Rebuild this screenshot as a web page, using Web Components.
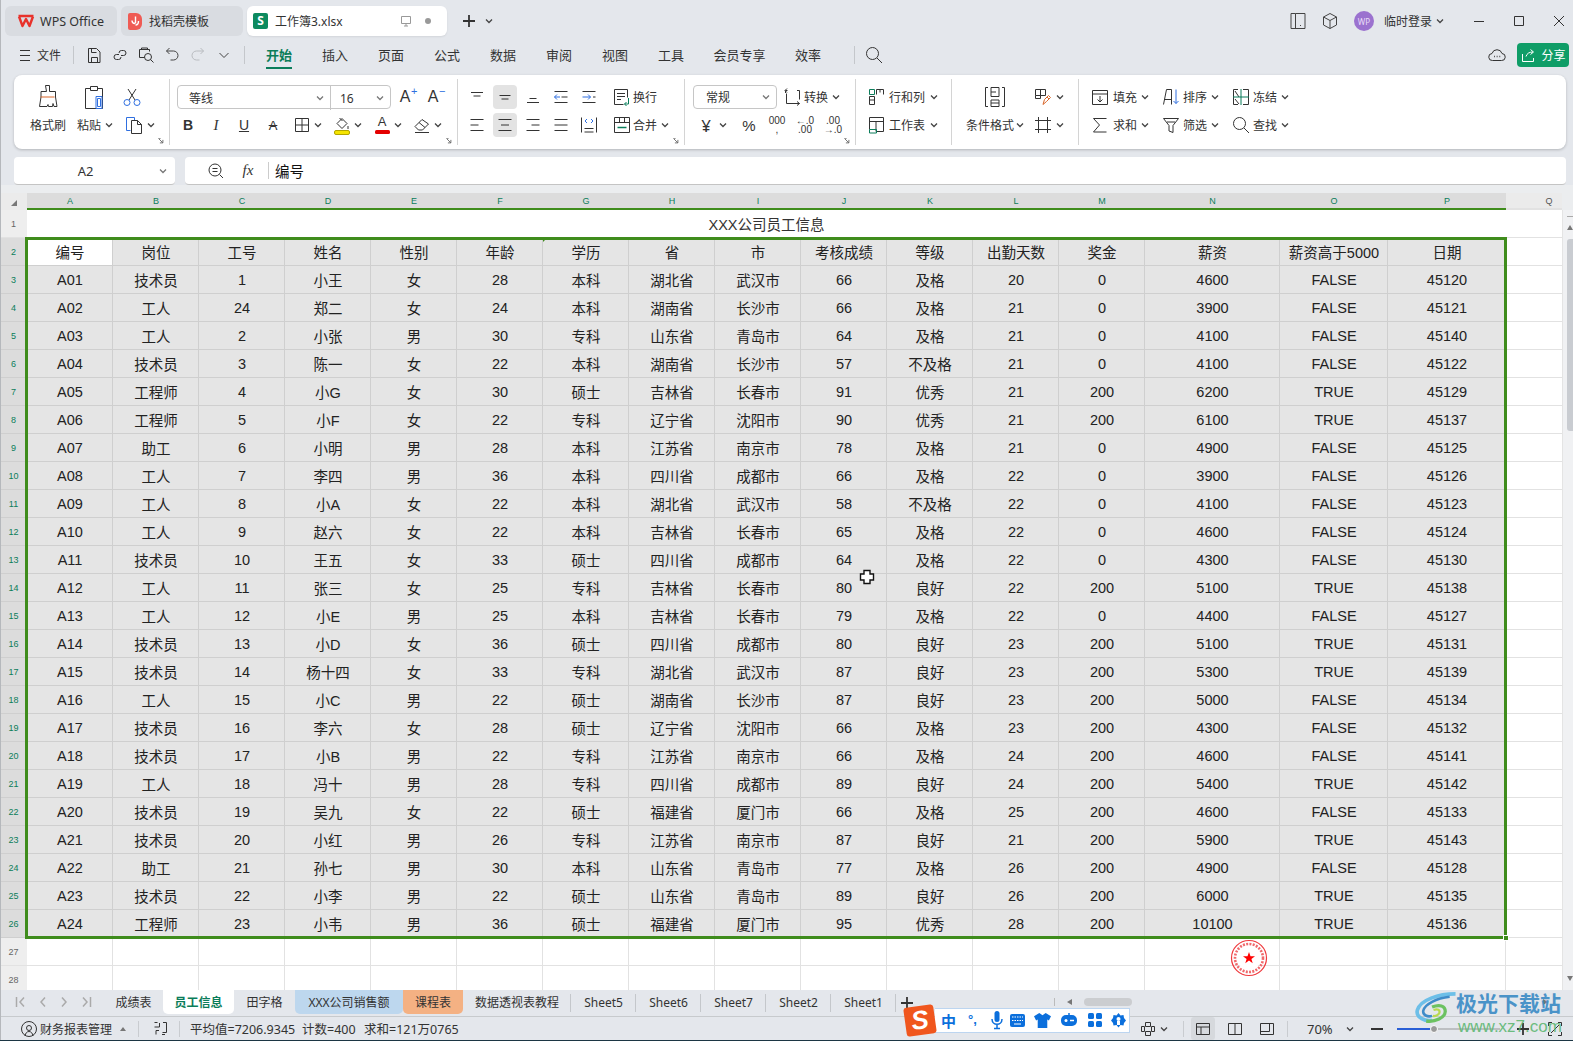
<!DOCTYPE html>
<html lang="zh"><head><meta charset="utf-8"><title>工作簿3.xlsx</title>
<style>
html,body{margin:0;padding:0;background:#e4e7ec;overflow:hidden}
body{font-family:"Noto Sans","Noto Sans CJK SC",sans-serif;color:#333}
</style></head>
<body>
<wps-app>
  <wps-titlebar></wps-titlebar>
  <wps-menubar></wps-menubar>
  <wps-ribbon></wps-ribbon>
  <wps-formula></wps-formula>
  <wps-sheet></wps-sheet>
  <wps-sheettabs></wps-sheettabs>
  <wps-status></wps-status>
  <wps-ime></wps-ime>
  <wps-watermark></wps-watermark>
</wps-app>
<script>
const BLUE='#2f6fe0',ORG='#d9662a',GRN='#0b7d5a';
const ICONS={
 burger:[18,`<path d="M4 4.500h10M4 9.500h10M4 14.500h10"/>`],
 save:[20,`<path d="M4.500 3.500h8l3.500 3.500v10.500h-11.500z"/><path d="M7.500 3.500v4h5M7.500 17.500v-5h6v5"/>`],
 share2:[20,`<path d="M9 9.500h-2.500a2.500 2.500 0 0 0 0 5h2a2.500 2.500 0 0 0 2.500-2.500M11 10.500h2.500a2.500 2.500 0 0 0 0-5h-2a2.500 2.500 0 0 0-2.500 2.500"/>`],
 printsearch:[20,`<path d="M3.500 12.500v-8h10v2M3.500 12.500h5"/><circle cx="12" cy="12" r="3.500"/><path d="M14.500 14.500l3 3M5.500 4.500v-1.500h6v1.500"/>`],
 undo:[20,`<path d="M4.500 6h7a4.500 4.500 0 0 1 0 9h-3M4.500 6l3-3M4.500 6l3 3" stroke="#444"/>`],
 redo:[20,`<path d="M15.500 6h-7a4.500 4.500 0 0 0 0 9h3M15.500 6l-3-3M15.500 6l-3 3" stroke="#b9bcc0"/>`],
 chev:[20,`<path d="M5.500 8l4.500 4.500 4.500-4.500" stroke="#444"/>`],
 search:[20,`<circle cx="8.500" cy="8.500" r="6"/><path d="M13 13l5 5"/>`],
 monitor:[14,`<path d="M2.500 2.500h9v7h-9zM5 12h4M7 9.500v2.500" stroke="#999"/>`],
 cloud:[20,`<path d="M5.500 15.500a3.500 3.500 0 0 1-.5-7 5.200 5.200 0 0 1 10 0 3.500 3.500 0 0 1-.5 7z"/><path d="M7 11.500h.8M9.700 11.500h.8M12.400 11.500h.8" stroke-width="1.400"/>`],
 shareup:[16,`<path d="M2.500 7v7.500h11V11M6 9.500c1-3 3-4.500 7-4.500M10.500 2.500l3 2.500-3 2.500" stroke="#fff"/>`],
 brush:[26,`<path d="M10.500 1.500h4v6h6v5.500l1.500 9.500h-3l-1-3-.5 3h-4l-.5-2-1 2h-7.500l1.500-9.500v-5.500h5.500z"/><path d="M5.500 13h14" stroke="${ORG}"/>`],
 paste:[24,`<path d="M7.500 3.500h-5v20h17v-20h-5M7.500 5.500v-4h7v4z"/><path d="M13 11.500h6v12h-6z" stroke="${BLUE}"/><path d="M14.500 13.500h3v8h-3z" stroke="${BLUE}"/>`],
 cut:[20,`<path d="M6 2l7 11M14 2L7 13"/><circle cx="5" cy="15.500" r="3" stroke="${BLUE}"/><circle cx="15" cy="15.500" r="3" stroke="${BLUE}"/>`],
 copy:[20,`<path d="M6.500 15.500h-4v-13h8v3" stroke="${BLUE}"/><path d="M7.500 5.500h6l4 4v9h-10zM13.500 5.500v4h4"/>`],
 grid:[20,`<path d="M3.500 3.500h13v13h-13zM10 3.500v13M3.500 10h13"/>`],
 fill:[20,`<path d="M5 8.500l5-5 5 5-5 5z"/><path d="M7.500 3l3 3M16 11v3"/><rect x="2.500" y="15.500" width="15" height="4" rx="1.500" fill="#f5e400" stroke="#b3a500"/>`],
 eraser:[20,`<path d="M3 11.500l7-7 6.500 4.500-6 6h-4z"/><path d="M7 7.500l6 5M3 17.500h14"/>`],
 atop:[20,`<path d="M4 5.500h12M6.500 9h7"/>`],
 amid:[20,`<path d="M4.500 8.500h11M6.500 12h7"/>`],
 abot:[20,`<path d="M6.500 11.500h7M4 15.500h12"/>`],
 aleft:[20,`<path d="M3.500 4.500h13M3.500 10h8M3.500 15.500h13"/>`],
 acen:[20,`<path d="M3.500 4.500h13M6 10h8M3.500 15.500h13"/>`],
 aright:[20,`<path d="M3.500 4.500h13M8.500 10h8M3.500 15.500h13"/>`],
 ajust:[20,`<path d="M3.500 4.500h13M3.500 10h13M3.500 15.500h13"/>`],
 outdent:[20,`<path d="M3.500 4.500h13M10.500 10h6M3.500 15.500h13"/><path d="M9 10h-5.500M6 7.500l-2.500 2.500 2.500 2.500" stroke="${BLUE}"/>`],
 indent:[20,`<path d="M3.500 4.500h13M3.500 15.500h13M14 10h2.500"/><path d="M3.500 10h8M9 7.500l2.500 2.500-2.500 2.500" stroke="${BLUE}"/>`],
 dist:[20,`<path d="M2.500 2.500v15M17.500 2.500v15M5.500 13.500h9M5.500 17h9"/><path d="M8 4l-2 2 2 2M12 4l2 2-2 2" stroke="${BLUE}"/>`],
 wrap:[20,`<path d="M2.500 2.500h13v8M2.500 2.500v15h9"/><path d="M5 6.500h8M5 9.500h8M5 12.500h4"/><path d="M16.500 11v6h-4M14.500 15l-2 2 2 2" stroke="${GRN}"/>`],
 merge:[20,`<path d="M2.500 2.500h15v15h-15zM2.500 7.500h15M7.500 2.500v5M12.500 2.500v5"/><path d="M5.500 12.500h9" stroke="${GRN}" stroke-width="1.500"/>`],
 convert:[20,`<path d="M3.500 6v-2.500h2M15 3.500h2.500v9M17.500 16.500h-13v-10"/><path d="M5 1.500l-2 2 2 2M15 14.500l2.500 2-2.500 2"/>`],
 rowcol:[20,`<path d="M3.500 2.500h5v5h-5z" stroke="${GRN}"/><path d="M3.500 9.500h5v8h-5zM3.500 13h5M10.500 2.500h7v5M10.500 2.500v5M14 2.500v3"/>`],
 wsheet:[20,`<path d="M3.500 2.500h14v14M3.500 2.500v12M3.500 6.500h14M10 6.500v10M10 16.500h7.500"/><path d="M3.500 14.500h7v3.500h-7z" stroke="${GRN}"/>`],
 cond:[24,`<path d="M5 2.500h-2.500v19h2.500M19 2.500h2.500v19h-2.500M8 2.500h8v9h-8zM8 15h8v6.500h-8zM8 7h5M8 18h8"/>`],
 cellstyle:[20,`<path d="M2.500 2.500h10v6h-10zM7.500 2.500v9h-5v-3"/><path d="M10 17.500l1.500-5 4-4 2 2-4 4zM14 10l2 2" stroke="${ORG}"/>`],
 crop:[20,`<path d="M5.500 2v16M14.500 2v16M2 5.500h16M2 14.500h16"/>`],
 fillc:[20,`<path d="M2.500 3.500h15v14h-15zM2.500 7h15"/><path d="M10 9v6M7.500 12.500l2.500 2.500 2.500-2.500"/>`],
 sort:[20,`<path d="M5.500 2.500h5v15M5.500 2.500l-3 15M3.500 12.500h7"/><path d="M15 2.500v14M12.500 14l2.500 2.500 2.500-2.500" stroke="${BLUE}"/>`],
 freeze:[20,`<path d="M7 2.500h-4.500v15h4.500M12 2.500h5.500v15h-5.500M4 4l4 6M4 12l4 5"/><path d="M2 10h16M10 2v16" stroke="${GRN}"/>`],
 sum:[20,`<path d="M16.500 3.500h-13l6 6.500-6 7h13"/>`],
 filter:[20,`<path d="M2.500 3.500h15l-5.500 7v7l-4-1.500v-5.500zM6 7h8"/>`],
 tablet:[20,`<path d="M7.500 2.500h9.500v15h-14v-15h4.500v15M12 14.500h1" stroke="#444"/>`],
 cube:[20,`<path d="M10 2.500l6.500 3.500v8l-6.500 3.500-6.500-3.500v-8zM3.500 6l6.500 3.500 6.500-3.500M10 9.500v8" stroke="#444"/>`],
 minw:[20,`<path d="M5 10.500h10"/>`],
 maxw:[20,`<path d="M5.500 5.500h9v9h-9z"/>`],
 closew:[20,`<path d="M5 5l10 10M15 5L5 15"/>`],
 plus:[20,`<path d="M10 4v12M4 10h12" stroke-width="1.800"/>`],
 zoomf:[18,`<circle cx="8" cy="8" r="6"/><path d="M12.500 12.500l3.500 3.500M5.500 6.500h5M5.500 9.500h5"/>`],
 person:[20,`<circle cx="10" cy="10" r="7.500"/><circle cx="10" cy="9" r="2.500"/><path d="M6 17c.5-3 2-4.500 4-4.500s3.500 1.500 4 4.500"/>`],
 statcfg:[20,`<path d="M3.500 3.500h3M3.500 8h5v-4M8 11.500h-3v4M12 3.500h3.500v10h-4M11 15.500h3"/>`],
 center:[18,`<path d="M6.500 2.500h5v4h-5zM6.500 11.500h5v4h-5zM2.500 6.500h3v5h-3zM12.500 6.500h3v5h-3z"/>`],
 vnorm:[16,`<path d="M1.500 2.500h13v11h-13zM1.500 6h13M6 6v7.500"/>`],
 vpage:[16,`<path d="M1.500 2.500h13v11h-13zM8 2.500v11"/>`],
 vbreak:[16,`<path d="M1.500 2.500h13v11h-13zM1.500 10.500h9v-8"/>`],
 full:[16,`<path d="M5 1.500h-3.500v3.500M11 1.500h3.500v3.500M5 14.500h-3.500v-3.500M11 14.500h3.500v-3.500M4 12l8-8"/>`]
};
class Base extends HTMLElement{
  constructor(){super();this.attachShadow({mode:'open'})}
}
customElements.define('wps-icon',class extends Base{
  connectedCallback(){
    const [s,d]=ICONS[this.getAttribute('name')]||[20,''];
    this.shadowRoot.innerHTML=`<style>:host{display:inline-flex;flex:none;width:${s}px;height:${s}px}svg{display:block;fill:none;stroke:#333;stroke-width:1}</style><svg width="${s}" height="${s}" viewBox="0 0 ${s} ${s}">${d}</svg>`;
  }
});
customElements.define('wps-caret',class extends Base{
  connectedCallback(){
    const c=this.getAttribute('color')||'#444';
    this.shadowRoot.innerHTML=`<style>:host{display:inline-flex;flex:none;width:8px;height:8px;align-items:center;justify-content:center}svg{display:block}</style><svg width="8" height="8" viewBox="0 0 8 8"><path d="M1 2.500l3 3 3-3" fill="none" stroke="${c}" stroke-width="1.300"/></svg>`;
  }
});
customElements.define('wps-tool',class extends Base{
  connectedCallback(){
    const a=n=>this.getAttribute(n);
    const w=a('w')||20,ml=a('ml')||0,lm=a('lm')||3,cm=a('cm')||4;
    const box=a('icon')?`<wps-icon name="${a('icon')}"></wps-icon>`:'<slot></slot>';
    this.shadowRoot.innerHTML=`<style>
      :host{display:inline-flex;flex:none;align-items:center;height:24px;margin-left:${ml}px;font-size:12px;color:#333}
      .b{display:flex;align-items:center;justify-content:center;width:${w}px;height:24px;border-radius:4px;${this.hasAttribute('active')?'background:#e3e3e3;':''}}
      .l{margin-left:${lm}px;white-space:nowrap}
      wps-caret{margin-left:${cm}px}
    </style><span class="b">${box}</span>${a('label')?`<span class="l">${a('label')}</span>`:''}${this.hasAttribute('caret')?'<wps-caret></wps-caret>':''}`;
  }
});
customElements.define('wps-group',class extends Base{
  connectedCallback(){
    const w=this.getAttribute('w'),p=this.getAttribute('pad')||0,nb=this.hasAttribute('noborder');
    this.shadowRoot.innerHTML=`<style>
      :host{display:block;position:relative;flex:none;box-sizing:border-box;height:66px;padding:6px 0 0 ${p}px;${w?`width:${w}px;`:'flex:1;'}${nb?'':'border-right:1px solid #d4d4d4;'}}
      .g{display:flex;flex-direction:column;gap:4px}
      .launch{position:absolute;right:5px;bottom:1px;width:6px;height:6px}
    </style><div class="g"><slot></slot></div>${this.hasAttribute('launch')?'<svg class="launch" viewBox="0 0 8 8"><path d="M1 1l5.500 5.500M6.500 2.500v4h-4" fill="none" stroke="#666" stroke-width="1.200"/><path d="M.5 .5h3" stroke="#666"/></svg>':''}`;
  }
});
customElements.define('wps-select',class extends Base{
  connectedCallback(){
    this.shadowRoot.innerHTML=`<style>:host{display:flex;flex:none;align-items:center;justify-content:space-between;box-sizing:border-box;height:24px;font-size:12px;color:#333;padding:0 6px 0 11px}</style><slot></slot><wps-caret color="#777"></wps-caret>`;
  }
});
customElements.define('wps-app',class extends Base{
  constructor(){super();this.shadowRoot.innerHTML=`<style>:host{display:flex;flex-direction:column;position:relative;width:1573px;height:1041px;overflow:hidden;background:#e4e7ec;box-sizing:border-box;border-bottom:1px solid #1c3644}
  .edge{position:absolute;left:0;top:0;bottom:0;width:1px;background:#b5b8bc}</style><slot></slot><div class="edge"></div>`}
});
customElements.define('wps-titlebar',class extends Base{
  constructor(){super();this.shadowRoot.innerHTML=`<style>
  :host{display:flex;flex:none;height:36px;box-sizing:border-box;padding:6px 0 0 5px;align-items:flex-start;font-size:12.5px;color:#333}
  .t{display:flex;align-items:center;height:30px;border-radius:6px;background:#d9dce1;box-sizing:border-box;margin-right:4px}
  .t span{white-space:nowrap}
  .a{background:#fff;box-shadow:0 1px 2px rgba(0,0,0,.08)}
  .x{width:15px;height:16px;background:#0d8a5f;border-radius:2px;color:#fff;font-weight:700;font-size:12px;display:flex;align-items:center;justify-content:center;line-height:1}
  .dot{width:6px;height:6px;border-radius:50%;background:#999}
  .r{margin-left:auto;display:flex;align-items:center;height:30px;padding-right:4px}
  .av{width:20px;height:20px;border-radius:50%;background:#9b72cf;color:#e9ddf7;font-size:8px;display:flex;align-items:center;justify-content:center}
  </style>
  <div class="t" style="width:112px;padding-left:12px"><svg width="18" height="14" viewBox="0 0 18 14" style="margin-right:5px"><path d="M1.500 2h15M2 2.500l3.500 9.500 3.500-7 3.500 7 3.500-9.500" fill="none" stroke="#e8322c" stroke-width="2.400" stroke-linejoin="round"/></svg><span>WPS Office</span></div>
  <div class="t" style="width:122px;padding-left:7px"><svg width="14" height="17" viewBox="0 0 14 17" style="margin-right:7px"><path d="M2 0h6a6 6 0 0 1 6 6v5a6 6 0 0 1-6 6H2a2 2 0 0 1-2-2V2a2 2 0 0 1 2-2z" fill="#ef5b54"/><path d="M7.500 3.500v7M7 10.500c-2 0-3-1.500-3-3M7.500 12c2 0 3-2 3-4" stroke="#fff" stroke-width="1.400" fill="none"/></svg><span style="font-size:12px">找稻壳模板</span></div>
  <div class="t a" style="width:200px;padding-left:6px"><span class="x">S</span><span style="margin-left:7px;width:124px;font-size:12px">工作簿3.xlsx</span><wps-icon name="monitor"></wps-icon><span class="dot" style="margin-left:12px"></span></div>
  <wps-icon name="plus" style="margin:5px 0 0 8px"></wps-icon><wps-caret style="margin:11px 0 0 6px"></wps-caret>
  <div class="r"><wps-icon name="tablet"></wps-icon><wps-icon name="cube" style="margin-left:12px"></wps-icon>
  <span class="av" style="margin-left:14px">WP</span><span style="margin-left:10px;font-size:12px;white-space:nowrap">临时登录</span><wps-caret style="margin-left:4px"></wps-caret>
  <wps-icon name="minw" style="margin-left:25px"></wps-icon><wps-icon name="maxw" style="margin-left:20px"></wps-icon><wps-icon name="closew" style="margin-left:20px"></wps-icon></div>`}
});
customElements.define('wps-menubar',class extends Base{
  constructor(){super();
  const tabs=[['开始',56,1],['插入',56],['页面',56],['公式',56],['数据',56],['审阅',56],['视图',56],['工具',56],['会员专享',81],['效率',56]];
  this.shadowRoot.innerHTML=`<style>
  :host{display:flex;flex:none;height:39px;align-items:center;padding:0 4px 2px 16px;font-size:13px;color:#333;box-sizing:border-box}
  .s{width:1px;height:18px;background:#c4c7cb;flex:none}
  .t{position:relative;display:flex;justify-content:center;align-items:center;height:37px;flex:none;white-space:nowrap}
  .t.on{color:${GRN};font-weight:700}
  .t.on::after{content:"";position:absolute;left:15px;right:15px;bottom:4px;height:2px;background:${GRN}}
  .ic{display:flex;gap:6px;margin:0 10px}
  .share{display:flex;align-items:center;justify-content:center;gap:5px;width:52px;height:24px;background:#0f9d67;color:#fff;border-radius:4px;font-size:12px;margin-left:10px}
  </style><wps-icon name="burger"></wps-icon><span style="margin:0 12px 0 3px;font-size:12px">文件</span><span class="s"></span>
  <span class="ic">${['save','share2','printsearch','undo','redo','chev'].map(n=>`<wps-icon name="${n}"></wps-icon>`).join('')}</span><span class="s"></span>
  <span style="width:6px"></span>${tabs.map(t=>`<span class="t${t[2]?' on':''}" style="width:${t[1]}px">${t[0]}</span>`).join('')}
  <span class="s" style="margin-left:18px"></span><wps-icon name="search" style="margin-left:9px"></wps-icon>
  <wps-icon name="cloud" style="margin-left:auto"></wps-icon><span class="share"><wps-icon name="shareup"></wps-icon>分享</span>`}
});
customElements.define('wps-ribbon',class extends Base{
  constructor(){super();this.shadowRoot.innerHTML=`<style>
  :host{display:flex;flex:none;height:74px;margin:0 7px 0 14px;padding-top:4px;box-sizing:border-box;background:#fff;border-radius:8px;box-shadow:0 1px 3px rgba(0,0,0,.22)}
  .row{display:flex;align-items:center;height:24px}
  .col{display:flex;flex-direction:column;gap:4px;align-items:center}
  .lb{font-size:12px;height:24px;display:flex;align-items:center;gap:4px;white-space:nowrap;color:#333}
  .ctr{display:flex;justify-content:center;align-items:center;height:24px}
  .fs{display:flex;box-sizing:border-box;height:24px;border:1px solid #c6c6c6;border-radius:4px;margin-left:3px;width:214px;flex:none}
  .vl{border-left:1px solid #c6c6c6}
  .A{font:16px "Liberation Sans",sans-serif;color:#333;position:relative;padding-right:6px}
  .A i{position:absolute;font:normal 11px "Liberation Sans",sans-serif;color:${BLUE};top:-3px;right:-1px}
  b.g,u.g{font-family:"Liberation Sans",sans-serif;font-size:14px;color:#333}
  i.g{font:italic 15px "Liberation Serif",serif;color:#333}
  b.g{font-weight:700}
  s.g{font:13px "Liberation Sans",sans-serif;color:#333}
  .cA{display:flex;flex-direction:column;align-items:center;font:13px/12px "Liberation Sans",sans-serif}
  .cA span{width:15px;height:4px;background:#e40000;border-radius:1.500px;margin-top:2px}
  .num{font:10px "Liberation Sans",sans-serif;color:#333;text-align:center;line-height:9px;white-space:pre}
  </style>
  <wps-group w="156" launch>
    <div style="display:flex">
      <div class="col" style="width:42px;margin-left:13px"><div class="ctr"><wps-icon name="brush"></wps-icon></div><div class="lb">格式刷</div></div>
      <div class="col" style="width:46px;margin-left:3px"><div class="ctr"><wps-icon name="paste"></wps-icon></div><div class="lb">粘贴<wps-caret></wps-caret></div></div>
      <div class="col" style="margin-left:4px;align-items:flex-start"><wps-tool icon="cut"></wps-tool><wps-tool icon="copy" caret ml="2" cm="3"></wps-tool></div>
    </div>
  </wps-group>
  <wps-group w="288" pad="4" launch>
    <div class="row"><div class="fs"><wps-select style="width:152px">等线</wps-select><wps-select class="vl" style="width:60px;padding-left:9px">16</wps-select></div>
      <wps-tool w="28" ml="3"><span class="A">A<i>+</i></span></wps-tool><wps-tool w="28"><span class="A">A<i>−</i></span></wps-tool></div>
    <div class="row"><wps-tool w="28"><b class="g">B</b></wps-tool><wps-tool w="28"><i class="g">I</i></wps-tool><wps-tool w="28"><u class="g">U</u></wps-tool><wps-tool w="28" ml="1"><s class="g">A</s></wps-tool>
      <wps-tool w="28" ml="1" icon="grid" caret cm="-2"></wps-tool><wps-tool w="28" ml="6" icon="fill" caret cm="-2"></wps-tool>
      <wps-tool w="28" ml="6" caret cm="-2"><span class="cA">A<span></span></span></wps-tool><wps-tool w="28" ml="6" icon="eraser" caret cm="-2"></wps-tool></div>
  </wps-group>
  <wps-group w="227" pad="7" launch>
    <div class="row"><wps-tool w="24" icon="atop"></wps-tool><wps-tool w="24" ml="4" icon="amid" active></wps-tool><wps-tool w="24" ml="4" icon="abot"></wps-tool><wps-tool w="24" ml="4" icon="outdent"></wps-tool><wps-tool w="24" ml="4" icon="indent"></wps-tool><wps-tool icon="wrap" label="换行" ml="11" lm="1"></wps-tool></div>
    <div class="row"><wps-tool w="24" icon="aleft"></wps-tool><wps-tool w="24" ml="4" icon="acen" active></wps-tool><wps-tool w="24" ml="4" icon="aright"></wps-tool><wps-tool w="24" ml="4" icon="ajust"></wps-tool><wps-tool w="24" ml="4" icon="dist"></wps-tool><wps-tool icon="merge" label="合并" ml="11" lm="1" caret></wps-tool></div>
  </wps-group>
  <wps-group w="171" pad="8" launch>
    <div class="row"><wps-select style="width:84px;border:1px solid #c6c6c6;border-radius:4px;padding-left:12px">常规</wps-select><wps-tool icon="convert" label="转换" ml="5" lm="2" caret></wps-tool></div>
    <div class="row"><wps-tool w="24" ml="1"><span style="font-size:17px">¥</span></wps-tool><wps-caret style="margin-left:1px"></wps-caret>
      <wps-tool w="24" ml="10"><span style="font:15px 'Liberation Sans',sans-serif">%</span></wps-tool>
      <wps-tool w="24" ml="4"><span class="num">000
,</span></wps-tool><wps-tool w="24" ml="4"><span class="num">←.0
.00</span></wps-tool><wps-tool w="24" ml="4"><span class="num">.00
→.0</span></wps-tool></div>
  </wps-group>
  <wps-group w="96" pad="10">
    <div class="row"><wps-tool icon="rowcol" label="行和列" caret cm="5"></wps-tool></div>
    <div class="row"><wps-tool icon="wsheet" label="工作表" caret cm="5"></wps-tool></div>
  </wps-group>
  <wps-group w="127" pad="13">
    <div style="display:flex"><div class="col" style="width:60px"><div class="ctr"><wps-icon name="cond"></wps-icon></div><div class="lb" style="gap:2px">条件格式<wps-caret></wps-caret></div></div>
    <div class="col" style="margin-left:8px;align-items:flex-start"><wps-tool icon="cellstyle" caret cm="3"></wps-tool><wps-tool icon="crop" caret cm="3"></wps-tool></div></div>
  </wps-group>
  <wps-group pad="11" noborder>
    <div class="row"><wps-tool icon="fillc" label="填充" caret></wps-tool><wps-tool icon="sort" label="排序" caret ml="12" lm="2"></wps-tool><wps-tool icon="freeze" label="冻结" caret ml="12" lm="2"></wps-tool></div>
    <div class="row"><wps-tool icon="sum" label="求和" caret></wps-tool><wps-tool icon="filter" label="筛选" caret ml="12" lm="2"></wps-tool><wps-tool icon="search" label="查找" caret ml="12" lm="2"></wps-tool></div>
  </wps-group>`}
});
customElements.define('wps-formula',class extends Base{
  constructor(){super();this.shadowRoot.innerHTML=`<style>
  :host{display:flex;flex:none;gap:10px;height:28px;margin:8px 7px 0 14px}
  .b{background:#fff;border-radius:4px;border-bottom:1px solid #c4c4c4;box-sizing:border-box;height:28px;display:flex;align-items:center}
  .n{width:161px;font:13px "Noto Sans",sans-serif;color:#333;position:relative;justify-content:center;padding-right:18px}
  .f{flex:1}
  .fx{font:italic 15px "Liberation Serif",serif;color:#333;margin-left:13px;width:20px;text-align:center}
  .s{width:1px;height:17px;background:#ccc;margin-left:10px}
  .v{font:14.500px "Liberation Sans","Noto Sans CJK SC",sans-serif;color:#111;margin-left:6px}
  </style><div class="b n"><span>A2</span><wps-caret color="#777" style="position:absolute;right:8px"></wps-caret></div>
  <div class="b f"><wps-icon name="zoomf" style="margin-left:22px"></wps-icon><span class="fx">fx</span><span class="s"></span><span class="v">编号</span></div>`}
});
const HEAD='编号 岗位 工号 姓名 性别 年龄 学历 省 市 考核成绩 等级 出勤天数 奖金 薪资 薪资高于5000 日期'.split(' ');
const DATA=`A01 技术员 1 小王 女 28 本科 湖北省 武汉市 66 及格 20 0 4600 FALSE 45120
A02 工人 24 郑二 女 24 本科 湖南省 长沙市 66 及格 21 0 3900 FALSE 45121
A03 工人 2 小张 男 30 专科 山东省 青岛市 64 及格 21 0 4100 FALSE 45140
A04 技术员 3 陈一 女 22 本科 湖南省 长沙市 57 不及格 21 0 4100 FALSE 45122
A05 工程师 4 小G 女 30 硕士 吉林省 长春市 91 优秀 21 200 6200 TRUE 45129
A06 工程师 5 小F 女 22 专科 辽宁省 沈阳市 90 优秀 21 200 6100 TRUE 45137
A07 助工 6 小明 男 28 本科 江苏省 南京市 78 及格 21 0 4900 FALSE 45125
A08 工人 7 李四 男 36 本科 四川省 成都市 66 及格 22 0 3900 FALSE 45126
A09 工人 8 小A 女 22 本科 湖北省 武汉市 58 不及格 22 0 4100 FALSE 45123
A10 工人 9 赵六 女 22 本科 吉林省 长春市 65 及格 22 0 4600 FALSE 45124
A11 技术员 10 王五 女 33 硕士 四川省 成都市 64 及格 22 0 4300 FALSE 45130
A12 工人 11 张三 女 25 专科 吉林省 长春市 80 良好 22 200 5100 TRUE 45138
A13 工人 12 小E 男 25 本科 吉林省 长春市 79 及格 22 0 4400 FALSE 45127
A14 技术员 13 小D 女 36 硕士 四川省 成都市 80 良好 23 200 5100 TRUE 45131
A15 技术员 14 杨十四 女 33 专科 湖北省 武汉市 87 良好 23 200 5300 TRUE 45139
A16 工人 15 小C 男 22 硕士 湖南省 长沙市 87 良好 23 200 5000 FALSE 45134
A17 技术员 16 李六 女 28 硕士 辽宁省 沈阳市 66 及格 23 200 4300 FALSE 45132
A18 技术员 17 小B 男 22 专科 江苏省 南京市 66 及格 24 200 4600 FALSE 45141
A19 工人 18 冯十 男 28 专科 四川省 成都市 89 良好 24 200 5400 TRUE 45142
A20 技术员 19 吴九 女 22 硕士 福建省 厦门市 66 及格 25 200 4600 FALSE 45133
A21 技术员 20 小红 男 26 专科 江苏省 南京市 87 良好 21 200 5900 TRUE 45143
A22 助工 21 孙七 男 30 本科 山东省 青岛市 77 及格 26 200 4900 FALSE 45128
A23 技术员 22 小李 男 22 硕士 山东省 青岛市 89 良好 26 200 6000 TRUE 45135
A24 工程师 23 小韦 男 36 硕士 福建省 厦门市 95 优秀 28 200 10100 TRUE 45136`.split('\n').map(r=>r.split(' '));
customElements.define('wps-sheet',class extends Base{
  constructor(){super();
  const L='ABCDEFGHIJKLMNOP'.split('');
  let h='<div class="c corner"><svg width="8" height="8" viewBox="0 0 8 8"><path d="M7 1v6H1z" fill="#777"/></svg></div>';
  L.forEach(l=>h+=`<div class="ch">${l}</div>`);h+='<div class="ch q">Q</div>';
  h+='<div class="rh">1</div><div class="title">XXX公司员工信息</div><div class="e"></div>';
  h+='<div class="rh s">2</div>'+HEAD.map((t,i)=>`<div class="d${i?'':' w'}">${t}</div>`).join('')+'<div class="e"></div>';
  DATA.forEach((r,i)=>{h+=`<div class="rh s">${i+3}</div>`+r.map(t=>`<div class="d">${t}</div>`).join('')+'<div class="e"></div>'});
  [27,28].forEach(n=>{h+=`<div class="rh">${n}</div>`+L.map(()=>'<div class="e"></div>').join('')+'<div class="e"></div>'});
  this.shadowRoot.innerHTML=`<style>
  :host{display:flex;flex:none;height:805px;padding-top:8px;box-sizing:border-box;overflow:hidden;position:relative;background:#ebedef}
  .g{display:grid;width:1562px;flex:none;overflow:hidden;background:#fff;align-content:start;grid-template-columns:27px repeat(13,86px) 135px 108px 118px 86px;grid-template-rows:17px repeat(28,28px);font:14.500px "Liberation Sans","Noto Sans CJK SC",sans-serif;color:#222}
  .g>div{display:flex;align-items:center;justify-content:center;box-sizing:border-box;min-width:0}
  .corner{background:#ebebeb;padding:2px 0 0 0}
  .ch{background:#dcdcdc;color:${GRN};font-size:9px;border-bottom:2px solid #3f8c1c;padding-top:1px}
  .q{background:#ebebeb;color:#555;border-bottom:2px solid #e2e2e2}
  .rh{background:#eeeeee;color:#666;font-size:9px;border-bottom:1px solid #e2e2e2}
  .rh.s{background:#dcdcdc;color:${GRN};border-bottom:1px solid #cfcfcf}
  .title{grid-column:span 16;background:#fff;color:#333;padding-bottom:2px}
  .d{background:#e5e5e5;border-right:1px solid #cfcfcf;border-bottom:1px solid #cfcfcf;padding-left:1px}
  .d.w{background:#fff}
  .e{border-right:1px solid #e2e2e2;border-bottom:1px solid #e2e2e2}
  .sel{position:absolute;left:25px;top:52px;width:1482px;height:702px;box-sizing:border-box;border:3px solid #3f8c1c;pointer-events:none}
  .hd{position:absolute;left:1503px;top:750px;width:6px;height:6px;background:#3f8c1c;border:1px solid #fff;box-sizing:border-box}
  .tri{position:absolute;left:543px;top:52px;width:0;height:0;border-top:5px solid #3f8c1c;border-right:5px solid transparent}
  .stamp{position:absolute;left:1230px;top:754px}
  .cur{position:absolute;left:859px;top:384px}
  .sb{flex:1;background:#f0f1f3;display:flex;flex-direction:column;align-items:center;border-left:1px solid #e4e4e4;box-sizing:border-box;margin-top:17px}
  .sb .l{width:6px;height:1px;background:#aaa;margin-top:6px;align-self:flex-end;flex:none}
  .up,.dn{width:0;height:0;border:3.500px solid transparent;margin-left:4px;flex:none}
  .up{border-bottom:5px solid #777;margin-top:5px}
  .th{width:6px;height:192px;background:#c9ccd1;border-radius:3px 0 0 3px;align-self:flex-end;margin-top:9px;flex:none}
  .dn{border-top:5px solid #777;margin-top:auto;margin-bottom:6px}
  </style><div class="g">${h}</div>
  <div class="sb"><span class="l"></span><span class="up"></span><span class="th"></span><span class="dn"></span></div>
  <div class="sel"></div><div class="hd"></div><div class="tri"></div>
  <svg class="stamp" width="38" height="38" viewBox="0 0 38 38"><circle cx="19" cy="19" r="17.500" fill="none" stroke="#f03a3e" stroke-width="1.200"/><circle cx="19" cy="19" r="14" fill="none" stroke="#f0696c" stroke-width="2.600" stroke-dasharray="2 1.300"/><circle cx="19" cy="19" r="11.800" fill="#fff"/><path d="M19 13l1.500 4.200h4.500l-3.600 2.700 1.300 4.300-3.700-2.600-3.700 2.600 1.300-4.300-3.600-2.700h4.500z" fill="#f00"/></svg>
  <svg class="cur" width="16" height="16" viewBox="0 0 16 16"><path d="M5 1.500h6v3.500h3.500v6h-3.500v3.500h-6v-3.500h-3.500v-6h3.500z" fill="#fff" stroke="#111" stroke-width="1.400"/></svg>`}
});
customElements.define('wps-sheettabs',class extends Base{
  constructor(){super();
  const tabs=[['成绩表',59],['员工信息',71,'a'],['田字格',61],['XXX公司销售额',108,'bl'],['课程表',60,'or'],['数据透视表教程',108,'dv'],['Sheet5',65,'dv'],['Sheet6',65,'dv'],['Sheet7',65,'dv'],['Sheet2',65,'dv'],['Sheet1',65,'dv']];
  this.shadowRoot.innerHTML=`<style>
  :host{display:flex;flex:none;height:27px;box-sizing:border-box;border-bottom:1px solid #c7cacd;font-size:12px;color:#333;position:relative;background:#e4e7ec}
  .nav{width:104px;padding-left:15px;box-sizing:border-box;display:flex;gap:9px;align-items:center;height:24px;flex:none}
  .t{display:flex;flex:none;align-items:center;justify-content:center;height:24px;box-sizing:border-box;white-space:nowrap;border-radius:0 0 5px 5px}
  .a{background:#fff;color:${GRN};font-weight:700;font-size:12px}
  .bl{background:#bdd7ee}.or{background:#f4b183}
  .dv{position:relative}
  .dv::after{content:"";position:absolute;right:0;top:4px;bottom:2px;width:1px;background:#c4c7cb}
  .plus{width:22px;flex:none;display:flex;justify-content:center;padding-top:3px;box-sizing:border-box;height:24px}
  .sc{margin-left:136px;display:flex;align-items:center;height:24px;flex:none}
  .bar{width:1px;height:8px;background:#bbb}
  .ar{width:0;height:0;border:3.500px solid transparent;border-right:5px solid #777;margin-left:9px}
  .th{width:48px;height:8px;border-radius:4px;background:#cbcdd0;margin-left:12px}
  .ar2{width:0;height:0;border:3.500px solid transparent;border-left:5px solid #777;margin-left:411px}
  </style><div class="nav">
  <svg width="13" height="12" viewBox="0 0 13 12"><path d="M1.500 1v10M9 1.500l-4 4.500 4 4.500" fill="none" stroke="#aaa" stroke-width="1.500"/></svg>
  <svg width="12" height="12" viewBox="0 0 12 12"><path d="M8 1.500l-4 4.500 4 4.500" fill="none" stroke="#aaa" stroke-width="1.500"/></svg>
  <svg width="12" height="12" viewBox="0 0 12 12"><path d="M4 1.500l4 4.500-4 4.500" fill="none" stroke="#aaa" stroke-width="1.500"/></svg>
  <svg width="13" height="12" viewBox="0 0 13 12"><path d="M11.500 1v10M4 1.500l4 4.500-4 4.500" fill="none" stroke="#aaa" stroke-width="1.500"/></svg></div>
  ${tabs.map(t=>`<div class="t ${t[2]||''}" style="width:${t[1]}px">${t[0]}</div>`).join('')}
  <div class="plus"><wps-icon name="plus"></wps-icon></div>
  <div class="sc"><span class="bar"></span><span class="ar"></span><span class="th"></span><span class="ar2"></span></div>`}
});
customElements.define('wps-status',class extends Base{
  constructor(){super();this.shadowRoot.innerHTML=`<style>
  :host{display:flex;flex:none;height:23px;align-items:center;font-size:12px;color:#333;padding-left:19px;box-sizing:border-box;background:#e4e7ec}
  .s{width:1px;height:16px;background:#c9ccd0;flex:none}
  .v{font-size:12px;white-space:nowrap}
  .btn{width:24px;height:23px;display:flex;align-items:center;justify-content:center;flex:none;border-radius:3px}
  .on{background:#d6d9dd}
  .up{width:0;height:0;border:3.500px solid transparent;border-bottom:4.500px solid #777;margin:-3px 0 0 8px}
  .sl{position:relative;width:103px;height:2px;background:#bdbfc2;margin-left:13px;flex:none}
  .sl::before{content:"";position:absolute;left:0;top:0;width:34px;height:2px;background:#2a5fd6}
  .sl::after{content:"";position:absolute;left:33px;top:-3px;width:8px;height:8px;border-radius:50%;background:#9a9a9a;border:1px solid #fff;box-sizing:border-box}
  </style><wps-icon name="person"></wps-icon><span class="v" style="margin-left:1px">财务报表管理</span><span class="up"></span>
  <span class="s" style="margin-left:12px"></span><wps-icon name="statcfg" style="margin-left:12px"></wps-icon><span class="s" style="margin-left:8px"></span>
  <span class="v" style="margin-left:10px;width:112px;font-size:12.500px">平均值=7206.9345</span><span class="v" style="width:62px;font-size:12.500px">计数=400</span><span class="v" style="font-size:12.500px">求和=121万0765</span>
  <span style="margin-left:auto"></span><wps-icon name="center"></wps-icon><wps-caret style="margin-left:3px"></wps-caret>
  <span class="s" style="margin-left:15px"></span><span class="btn on" style="margin-left:7px"><wps-icon name="vnorm"></wps-icon></span><span class="btn" style="margin-left:8px"><wps-icon name="vpage"></wps-icon></span><span class="btn" style="margin-left:8px"><wps-icon name="vbreak"></wps-icon></span>
  <span class="s" style="margin-left:8px"></span><span style="margin-left:19px;font-size:13px;width:36px">70%</span><wps-caret style="margin-left:3px"></wps-caret>
  <svg width="14" height="4" viewBox="0 0 14 4" style="margin-left:16px;flex:none"><path d="M1 2h12" stroke="#333" stroke-width="2"/></svg>
  <span class="sl"></span><svg width="14" height="14" viewBox="0 0 14 14" style="margin-left:16px;flex:none"><path d="M1 7h12M7 1v12" stroke="#333" stroke-width="1.800"/></svg>
  <wps-icon name="full" style="margin:0 10px 0 17px"></wps-icon>`}
});
customElements.define('wps-ime',class extends Base{
  constructor(){super();this.shadowRoot.innerHTML=`<style>
  :host{position:absolute;left:905px;top:1005px;display:flex;align-items:center;height:30px}
  .s{width:30px;height:29px;background:#f0561d;border-radius:3px;color:#fff;font:italic 900 26px/29px "Liberation Sans",sans-serif;text-align:center;transform:rotate(-8deg);z-index:1}
  .b{display:flex;align-items:center;height:25px;width:195px;box-sizing:border-box;background:#fff;border:1px solid #bcd5f0;border-left:0;position:relative;color:#0b6fdc}
  .b>*{position:absolute}
  </style><div class="s">S</div><div class="b">
  <span style="left:6px;font:700 15px 'Noto Sans CJK SC',sans-serif">中</span>
  <span style="left:33px;top:3px;font:700 13px 'Liberation Sans',sans-serif">°,</span>
  <svg style="left:56px" width="12" height="20" viewBox="0 0 12 20"><rect x="3.500" y="1" width="5" height="11" rx="2.500" fill="#0b6fdc"/><path d="M1 9c0 7 10 7 10 0M6 14v4M3 18.500h6" fill="none" stroke="#0b6fdc" stroke-width="1.500"/></svg>
  <svg style="left:75px" width="15" height="13" viewBox="0 0 15 13"><rect width="15" height="13" rx="2" fill="#0b6fdc"/><path d="M2 3h11M2 6.500h11" stroke="#fff" stroke-dasharray="1.500 1"/><path d="M4 10h7" stroke="#fff"/></svg>
  <svg style="left:99px" width="17" height="15" viewBox="0 0 16 14"><path d="M5 0L0 3l2 4 1.500-1v8h9V6l1.500 1 2-4-5-3-3 2z" fill="#0b6fdc"/></svg>
  <svg style="left:126px" width="16" height="14" viewBox="0 0 16 14"><rect y="2" width="16" height="11" rx="5" fill="#0b6fdc"/><circle cx="5" cy="7.500" r="1.500" fill="#fff"/><path d="M9 7.500h4" stroke="#fff" stroke-width="1.500"/><path d="M8 2V0" stroke="#0b6fdc" stroke-width="1.500"/></svg>
  <svg style="left:153px" width="14" height="14" viewBox="0 0 14 14" fill="#0b6fdc"><rect width="6" height="6" rx="1.500"/><rect x="8" width="6" height="6" rx="1.500"/><rect y="8" width="6" height="6" rx="1.500"/><rect x="8" y="8" width="6" height="6" rx="1.500"/></svg>
  <svg style="left:176px" width="15" height="15" viewBox="0 0 15 15"><path d="M7.500 0l2 2.500 3-.500.500 3 2 2.500-2 2.500-.500 2.500-3-.500-2 2.500-2-2.500-3 .500-.500-2.500-2-2.500 2-2.500.500-3 3 .500z" fill="#0b6fdc"/><circle cx="7.500" cy="6" r="2" fill="#fff"/><path d="M6 8h3v4H6z" fill="#fff"/></svg>
  </div>`}
});
customElements.define('wps-watermark',class extends Base{
  constructor(){super();this.shadowRoot.innerHTML=`<style>
  :host{position:absolute;left:1413px;top:990px;width:160px;height:50px;pointer-events:none}
  svg{position:absolute;left:0;top:2px}
  .a{position:absolute;left:43px;top:0;font:700 21px/24px "Noto Sans CJK SC",sans-serif;color:#3d8cc6;opacity:.92;white-space:nowrap}
  .b{position:absolute;left:45px;top:28px;font:400 17px/18px "Liberation Sans",sans-serif;color:#57b56d;opacity:.85;white-space:nowrap}
  </style><svg width="44" height="36" viewBox="0 0 60 48" fill="none"><path d="M58 2C35 2 10 10 6 24c-3 11 12 16 20 14" stroke="#6dbfe8" stroke-width="5"/><path d="M50 6C32 8 16 16 14 25c-1 6 6 9 12 7" stroke="#3f8cc9" stroke-width="3.500"/><path d="M26 20c10-4 18-2 18 6 0 8-14 15-26 13" stroke="#6cc261" stroke-width="4.500"/><path d="M28 24c6-2 9 0 8 4-1 3-6 5-9 4" stroke="#b9d94f" stroke-width="3"/></svg>
  <div class="a">极光下载站</div><div class="b">www.xz7.com</div>`}
});
</script>
</body></html>
